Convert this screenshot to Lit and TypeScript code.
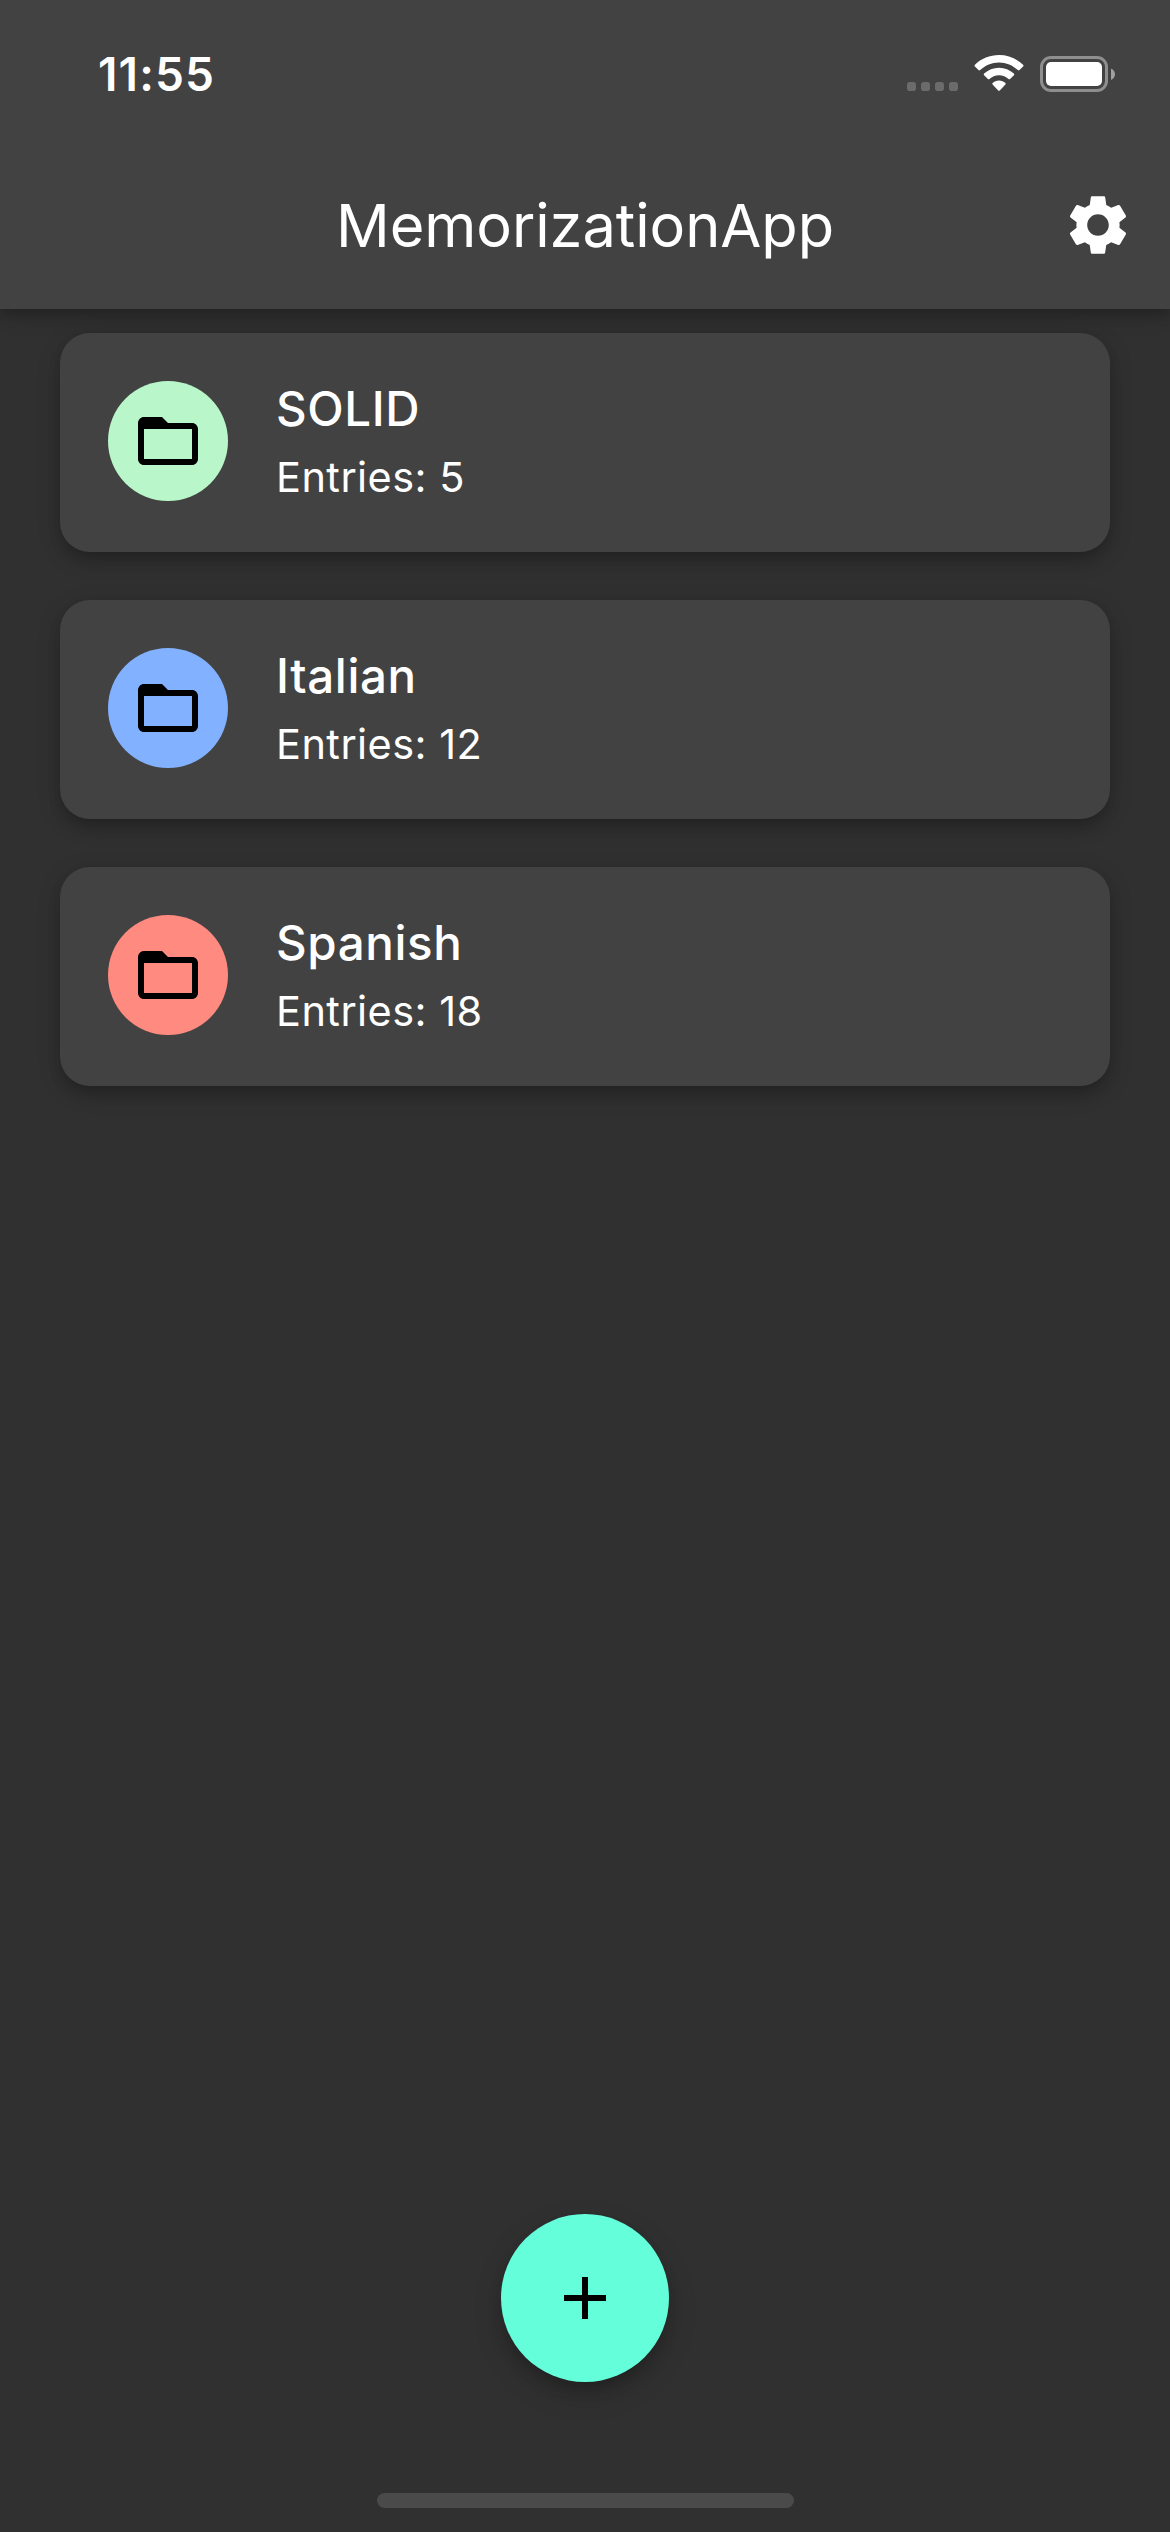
import { LitElement, html, css, svg } from "lit";
import { customElement, property } from "lit/decorators.js";
import { styleMap } from "lit/directives/style-map.js";

interface Deck {
  name: string;
  entries: number;
  color: string;
}

const decks: Deck[] = [
  { name: "SOLID", entries: 5, color: "#b9f6ca" },
  { name: "Italian", entries: 12, color: "#82b1ff" },
  { name: "Spanish", entries: 18, color: "#ff8a80" },
];

const folderPath = svg`<path d="M20 6h-8l-2-2H4c-1.1 0-1.99.9-1.99 2L2 18c0 1.1.9 2 2 2h16c1.1 0 2-.9 2-2V8c0-1.1-.9-2-2-2zm0 12H4V8h16v10z"/>`;
const gearPath = svg`<path d="M19.14 12.94c.04-.3.06-.61.06-.94 0-.32-.02-.64-.07-.94l2.03-1.58c.18-.14.23-.41.12-.61l-1.92-3.32c-.12-.22-.37-.29-.59-.22l-2.39.96c-.5-.38-1.03-.7-1.62-.94l-.36-2.54c-.04-.24-.24-.41-.48-.41h-3.84c-.24 0-.43.17-.47.41l-.36 2.54c-.59.24-1.13.57-1.62.94l-2.39-.96c-.22-.08-.47 0-.59.22L2.74 8.87c-.12.21-.08.47.12.61l2.03 1.58c-.05.3-.09.63-.09.94s.02.64.07.94l-2.03 1.58c-.18.14-.23.41-.12.61l1.92 3.32c.12.22.37.29.59.22l2.39-.96c.5.38 1.03.7 1.62.94l.36 2.54c.05.24.24.41.48.41h3.84c.24 0 .44-.17.47-.41l.36-2.54c.59-.24 1.13-.56 1.62-.94l2.39.96c.22.08.47 0 .59-.22l1.92-3.32c.12-.22.07-.47-.12-.61l-2.01-1.58zM12 15.6c-1.98 0-3.6-1.62-3.6-3.6s1.62-3.6 3.6-3.6 3.6 1.62 3.6 3.6-1.62 3.6-3.6 3.6z"/>`;

@customElement("status-bar")
export class StatusBar extends LitElement {
  static styles = css`
    :host {
      display: flex;
      justify-content: space-between;
      height: 141px;
      padding: 0 54px 0 98px;
      box-sizing: border-box;
    }
    .time {
      margin-top: 47px;
      font-size: 46px;
      line-height: 55px;
      font-weight: 600;
      letter-spacing: 1.15px;
      white-space: nowrap;
    }
    .status {
      display: block;
      margin-top: 50px;
      width: 212px;
      height: 46px;
    }
  `;

  render() {
    return html`
      <div class="time">11:55</div>
      <svg class="status" viewBox="904 50 212 46">
        <g fill="#6b6b6b">
          ${[907, 921, 935, 949].map((x) => svg`<rect x=${x} y="82" width="9" height="9" rx="2.8"/>`)}
        </g>
        <g fill="#fff">
          <path d="M999 55c9.2 0 17.700 3.500 24.100 9.800.5.5.5 1.200 0 1.700l-3.600 3.600c-.5.5-1.200.5-1.700 0-5-4.900-11.600-7.700-18.800-7.700s-13.800 2.800-18.800 7.700c-.5.5-1.200.5-1.700 0l-3.600-3.600c-.5-.5-.5-1.200 0-1.700C981.300 58.500 989.800 55 999 55z"/>
          <path d="M999 67.800c5.700 0 10.900 2.200 14.900 5.800.5.5.5 1.200 0 1.700l-3.800 3.700c-.4.4-1.100.4-1.600 0-2.500-2.300-5.800-3.700-9.500-3.700s-7 1.400-9.500 3.700c-.5.4-1.200.4-1.600 0l-3.800-3.700c-.5-.5-.5-1.200 0-1.700 4-3.600 9.200-5.800 14.900-5.800z"/>
          <path d="M999 80.600c2.500 0 4.700.9 6.400 2.400.5.5.5 1.100 0 1.600l-5.600 5.800c-.5.5-1.100.5-1.600 0l-5.600-5.800c-.5-.5-.5-1.100 0-1.600 1.700-1.500 3.900-2.400 6.400-2.400z"/>
        </g>
        <rect x="1041.5" y="57.5" width="65" height="33" rx="9.5" fill="none" stroke="#8e8e8e" stroke-width="3"/>
        <rect x="1046" y="62" width="56" height="24" rx="5" fill="#fff"/>
        <path d="M1111 68.5c2.400 1 4 3.200 4 5.800s-1.600 4.800-4 5.800z" fill="#a0a0a0"/>
      </svg>
    `;
  }
}

@customElement("deck-card")
export class DeckCard extends LitElement {
  @property({ attribute: false }) deck!: Deck;

  static styles = css`
    :host {
      display: flex;
      gap: 48px;
      height: 219px;
      padding: 48px;
      box-sizing: border-box;
      border-radius: 30px;
      background: #424242;
      box-shadow: 0 9px 15px -3px rgba(0, 0, 0, 0.2), 0 6px 24px rgba(0, 0, 0, 0.16);
    }
    .avatar {
      display: flex;
      align-items: center;
      justify-content: center;
      width: 120px;
      height: 120px;
      border-radius: 50%;
    }
    .icon {
      width: 72px;
      height: 72px;
      fill: #000;
    }
    .name {
      font-size: 47.5px;
      line-height: 56px;
      font-weight: 500;
      letter-spacing: 0.6px;
    }
    .entries {
      margin-top: 15px;
      font-size: 41.5px;
      line-height: 50px;
      letter-spacing: 0.45px;
    }
  `;

  render() {
    return html`
      <div class="avatar" style=${styleMap({ background: this.deck.color })}>
        <svg class="icon" viewBox="0 0 24 24">${folderPath}</svg>
      </div>
      <div class="text">
        <div class="name">${this.deck.name}</div>
        <div class="entries">Entries: ${this.deck.entries}</div>
      </div>
    `;
  }
}

@customElement("app-root")
export class AppRoot extends LitElement {
  static styles = css`
    :host {
      display: flex;
      flex-direction: column;
      height: 2532px;
      background: #303030;
      color: #fff;
      font-family: Inter, "Liberation Sans", sans-serif;
      font-kerning: normal;
    }
    .header {
      height: 309px;
      background: #424242;
      box-shadow: 0 6px 12px rgba(0, 0, 0, 0.2), 0 3px 24px rgba(0, 0, 0, 0.15);
    }
    .toolbar {
      display: grid;
      grid-template-columns: 72px 1fr 72px;
      align-items: center;
      height: 168px;
      padding: 0 36px;
    }
    .title {
      grid-column: 2;
      text-align: center;
      font-size: 59.5px;
      line-height: 72px;
      letter-spacing: -0.05px;
      white-space: nowrap;
    }
    .gear {
      width: 72px;
      height: 72px;
      fill: #fff;
    }
    .list {
      flex: 1;
      display: flex;
      flex-direction: column;
      gap: 48px;
      padding: 24px 60px;
    }
    .footer {
      display: flex;
      flex-direction: column;
      align-items: center;
      justify-content: space-between;
      height: 318px;
      padding-bottom: 24px;
      box-sizing: border-box;
    }
    .fab {
      display: flex;
      align-items: center;
      justify-content: center;
      width: 168px;
      height: 168px;
      padding: 0;
      border: 0;
      border-radius: 50%;
      background: #64ffda;
      box-shadow: 0 9px 15px -3px rgba(0, 0, 0, 0.2), 0 12px 30px rgba(0, 0, 0, 0.16);
    }
    .plus {
      width: 72px;
      height: 72px;
      fill: #000;
    }
    .home {
      width: 417px;
      height: 15px;
      border-radius: 8px;
      background: #4a4a4a;
    }
  `;

  render() {
    return html`
      <div class="header">
        <status-bar></status-bar>
        <div class="toolbar">
          <div class="title">MemorizationApp</div>
          <svg class="gear" viewBox="0 0 24 24">${gearPath}</svg>
        </div>
      </div>
      <div class="list">${decks.map((d) => html`<deck-card .deck=${d}></deck-card>`)}</div>
      <div class="footer">
        <button class="fab" aria-label="Add">
          <svg class="plus" viewBox="0 0 24 24"><path d="M19 13h-6v6h-2v-6H5v-2h6V5h2v6h6v2z"/></svg>
        </button>
        <div class="home"></div>
      </div>
    `;
  }
}
